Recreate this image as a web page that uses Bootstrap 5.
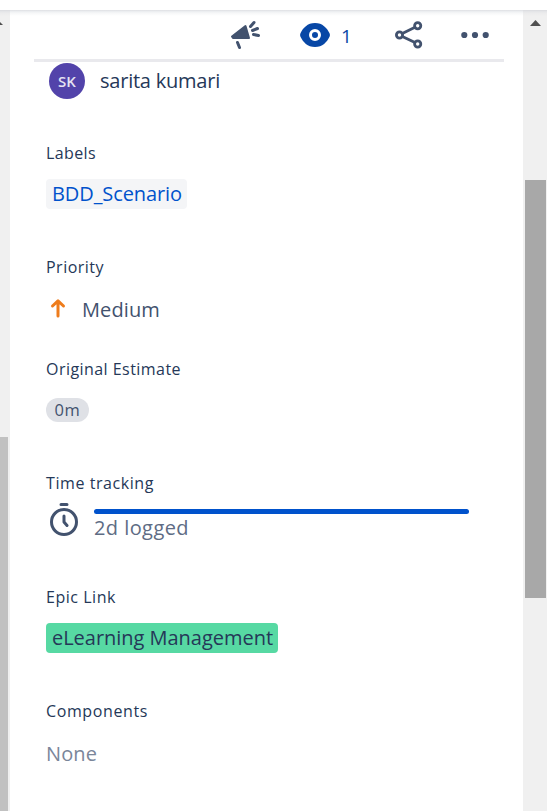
<!DOCTYPE html>
<html lang="en">
<head>
<meta charset="utf-8">
<meta name="viewport" content="width=device-width, initial-scale=1">
<title>Issue details</title>
<link href="https://cdn.jsdelivr.net/npm/bootstrap@5.3.0/dist/css/bootstrap.min.css" rel="stylesheet">
<style>
body{height:811px;overflow:hidden;font-family:"Open Sans","Noto Sans",sans-serif;font-size:20px;line-height:28px;color:#42526e;background:#fff}
svg{display:block;flex:none}
.topstrip{height:10px}
.shell{height:801px;background:linear-gradient(#dcdde1 0,#e9ebee 1px,#f6f7f8 3px,#fff 6px)}
.track{background:linear-gradient(#d8d9dd 0,#e2e3e6 1px,#ebebec 3px,#f0f0f0 6px)}
.track-left{width:10px}
.track-right{width:24px}
.thumb-left{width:8px;height:374px;margin-top:412px;background:#c1c1c1}
.thumb-right{width:21px;height:418px;margin:153px 0 0 2px;background:#a8a8a8}
.arrow-left{width:3px;height:3px;margin-top:12px}
.arrow-right{margin:10px 0 0 7px}
.toolbar{height:52px;margin:0 19px 0 24px;border-bottom:3px solid #e9e9ed}
.watch{color:#0747a6;font-size:19px;margin-left:11px;width:12px;transform:translateY(1px)}
.fields{padding:0 54px 0 36px}
.person{height:36px;margin:1px 0 0 3px}
.avatar{width:36px;height:36px;background:#5243aa;color:#fff;font-size:15px;font-weight:600;opacity:1}
.avatar span{opacity:.85}
.field{height:114px}
.field-short{height:102px}
.caption{height:24px;line-height:24px;font-size:16px;font-weight:500;color:#253858;white-space:nowrap}
.first{margin-top:42px}
.pill{height:30px;margin-top:14px;border-radius:4px;padding:0 6px;white-space:nowrap;line-height:29px}
.tagpill{background:#f4f5f7;color:#0052cc;width:141px}
.epic{background:#57d9a3;color:#253858;width:232px;text-decoration-thickness:2px;text-underline-offset:3px}
.estimate{height:24px;width:43px;margin-top:17px;font-size:16.5px;background:#dfe1e6;line-height:24px}
.level{margin-top:41px}
.bar{height:5px;width:375px;background:#0052cc;border-radius:3px}
.fit{display:inline-block;white-space:nowrap}
</style>
<script src="https://cdn.jsdelivr.net/npm/bootstrap@5.3.0/dist/js/bootstrap.bundle.min.js"></script>
</head>
<body>
<div class="topstrip"></div>
<div class="shell d-flex">
  <aside class="track track-left flex-shrink-0">
    <svg class="arrow-left" viewBox="0 0 3 3"><path d="M0 0L3 3H0Z" fill="#505050"/></svg>
    <div class="thumb-left"></div>
  </aside>
  <main class="flex-grow-1">
    <header class="toolbar d-flex align-items-center">
      <svg style="margin-left:196px" width="31" height="30" viewBox="230 20 31 30" fill="#42526e" stroke="#42526e" stroke-linecap="round" stroke-linejoin="round"><path d="M232 36.5L245.5 26L249 38L233 38Z" stroke-width="2"/><path d="M237.5 42.5L239.5 47.5M250.5 26.5L254 22.5M252.5 30.5L257.5 28.5M253.5 34.5L258.5 35.5" stroke-width="3" fill="none"/></svg>
      <svg class="ms-auto" width="30" height="24" viewBox="0 0 30 24"><path d="M15 0C7.5 0 3 5 .6 10Q-.4 12 .6 14C3 19 7.5 24 15 24S27 19 29.4 14Q30.4 12 29.4 10C27 5 22.5 0 15 0Z" fill="#0747a6"/><circle cx="15" cy="12" r="4.5" fill="none" stroke="#fff" stroke-width="3"/></svg>
      <span class="watch">1</span>
      <svg style="margin-left:42px" width="28" height="28" viewBox="0 0 28 28" fill="none" stroke="#42526e" stroke-width="2.8"><circle cx="4.5" cy="14" r="3.1"/><circle cx="22.7" cy="4.8" r="3.1"/><circle cx="22.7" cy="23" r="3.1"/><path d="M7.3 12.5L20 6.2M7.3 15.5L20 21.6"/></svg>
      <svg style="margin:0 15px 0 38px" width="28" height="8" viewBox="0 0 28 8" fill="#42526e"><circle cx="3.3" cy="4" r="3.1"/><circle cx="14" cy="4" r="3.1"/><circle cx="24.7" cy="4" r="3.1"/></svg>
    </header>
    <section class="fields">
      <div class="person d-flex align-items-center">
        <div class="avatar rounded-circle d-flex align-items-center justify-content-center"><span>SK</span></div>
        <span class="fit" data-w="119" style="margin-left:15px;color:#253858">sarita kumari</span>
      </div>
      <div class="field first"><div class="caption"><span class="fit" data-w="49">Labels</span></div>
        <div class="pill tagpill"><span class="fit" data-w="129">BDD_Scenario</span></div></div>
      <div class="field field-short"><div class="caption"><span class="fit" data-w="57">Priority</span></div>
        <div class="d-flex align-items-center" style="margin-top:17px">
          <svg style="margin:-4px 0 0 4px" width="16" height="20" viewBox="0 0 16 20" fill="none" stroke="#ee7c1c" stroke-width="3" stroke-linecap="round" stroke-linejoin="round"><path d="M8 18V3M2.5 8L8 2.8L13.5 8"/></svg>
          <span class="fit" data-w="77" style="margin-left:16px">Medium</span></div></div>
      <div class="field"><div class="caption"><span class="fit" data-w="134">Original Estimate</span></div>
        <div class="estimate rounded-pill text-center"><span class="fit" data-w="25">0m</span></div></div>
      <div class="field"><div class="caption"><span class="fit" data-w="107">Time tracking</span></div>
        <div class="d-flex">
          <svg style="margin:7px 0 0 3px" width="30" height="36" viewBox="0 0 30 36" fill="none" stroke="#42526e" stroke-width="3" stroke-linecap="round" stroke-linejoin="round"><circle cx="15" cy="20" r="12.5"/><path d="M12 2.5H18M15 14V20L18 23.5"/></svg>
          <div style="margin:14px 0 0 15px"><div class="bar"></div><div><span class="fit" data-w="94" style="color:#5e6c84">2d logged</span></div></div>
        </div></div>
      <div class="field"><div class="caption"><span class="fit" data-w="69">Epic Link</span></div>
        <a href="#" class="pill epic d-block"><span class="fit" data-w="220">eLearning Management</span></a></div>
      <div class="field"><div class="caption"><span class="fit" data-w="101">Components</span></div>
        <div style="margin-top:17px;color:#7a869a"><span class="fit" data-w="50">None</span></div></div>
    </section>
  </main>
  <aside class="track track-right flex-shrink-0">
    <svg class="arrow-right" width="11" height="7" viewBox="0 0 11 7"><path d="M5.5 0L11 6H0Z" fill="#505050"/></svg>
    <div class="thumb-right"></div>
  </aside>
</div>
<script>
document.querySelectorAll('.fit').forEach(function(el){
  var gap=(+el.dataset.w+1-el.getBoundingClientRect().width)/el.textContent.length;
  el.style.letterSpacing=gap.toFixed(3)+'px';
});
</script>
</body>
</html>
